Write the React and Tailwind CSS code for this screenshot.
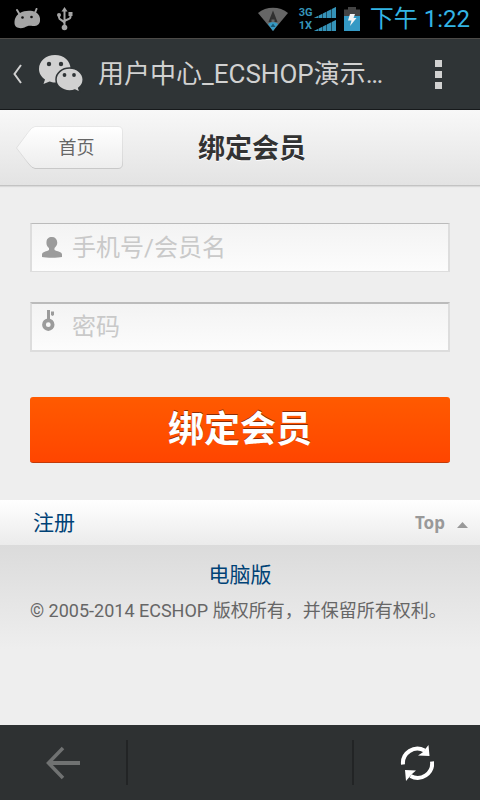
import React from 'react';

function AndroidIcon() {
  return (
    <svg width="28" height="22" viewBox="0 0 28 22" aria-hidden="true">
      <path d="M3 2 L6 7 M22.500 1 L20.500 6" stroke="#a5a5a5" strokeWidth="2" strokeLinecap="round" />
      <path d="M6 5 C10 2.500 17 2 21.500 4 C25 6 26.500 9 26 13 C25.500 17 22 18.500 18.500 18 C15 17.500 13 18 10.500 19.500 C6 21 0.500 20 0.500 15 C0.500 10 2.500 7 6 5Z" fill="#a5a5a5" />
      <circle cx="8.500" cy="9.500" r="1.300" fill="#111" />
      <circle cx="17.500" cy="9" r="1.300" fill="#111" />
    </svg>
  );
}

function UsbIcon() {
  return (
    <svg width="18" height="24" viewBox="0 0 18 24" fill="none" stroke="#a5a5a5" strokeWidth="2" aria-hidden="true">
      <path d="M8.500 4 V20 M3 8 V10.500 C3 13.500 8.500 13 8.500 16.500 M14.500 7 V10 C14.500 13 8.500 12 8.500 15" />
      <path d="M8.500 0 L11.500 4.500 H5.500Z" fill="#a5a5a5" stroke="none" />
      <circle cx="3" cy="8" r="2" fill="#a5a5a5" stroke="none" />
      <rect x="12.500" y="5" width="4" height="4" fill="#a5a5a5" stroke="none" />
      <circle cx="8.500" cy="20.500" r="2.800" fill="#a5a5a5" stroke="none" />
    </svg>
  );
}

function WifiIcon() {
  return (
    <svg width="30" height="24" viewBox="0 0 30 24" aria-hidden="true">
      <path d="M0 6 C8 -1 22 -1 30 6 L15 24Z" fill="#666" />
      <path d="M15 3.500 L19.500 15 H16.500 V12.500 H13.500 V15 H10.500Z" fill="#303030" />
      <path d="M10 17 C12.500 14.500 17.500 14.500 20 17 L15 24Z" fill="#3499c4" />
      <path d="M15 16.500 L17.500 20 H12.500Z" fill="#1b5570" />
    </svg>
  );
}

function SignalIcon() {
  return (
    <svg width="22" height="11" viewBox="0 0 22 11" aria-hidden="true">
      <path d="M0 11 L22 0 V11Z" fill="#1d4f63" />
      <path d="M0 11 L4 9 V11Z M5 8.500 L8 7 V11 H5Z M9 6.500 L12 5 V11 H9Z M13 4.500 L17 2.500 V11 H13Z M18 2 L22 0 V11 H18Z" fill="#3593b8" />
    </svg>
  );
}

function BatteryIcon() {
  return (
    <svg width="16" height="24" viewBox="0 0 16 24" aria-hidden="true">
      <path d="M4 0 H12 V2.500 H16 V9 H0 V2.500 H4Z" fill="#444" />
      <path d="M0 9 H16 V24 H0Z" fill="#3499c4" />
      <path d="M6 7 H11 L9.500 11 H12.500 L6 19 L7.500 13.500 H4Z" fill="#f4f4f4" />
    </svg>
  );
}

function WeChatIcon() {
  return (
    <svg width="45" height="38" viewBox="0 0 45 38" aria-hidden="true">
      <path d="M16 0 C7 0 0 6 0 14 C0 18.500 2.500 22 6 24.500 L4.500 29 L10.500 26.500 C12 27 14 27.500 16 27.500 C25 27.500 31.500 21.500 31.500 14 C31.500 6 25 0 16 0Z" fill="#d1d1d1" />
      <path d="M30.500 13 C23 13 17 18 17 24.500 C17 31 23 36 30.500 36 C32.500 36 34.500 35.700 36 35 L41 37.500 L39.700 33 C42.500 31 44.200 28 44.200 24.500 C44.200 18 38 13 30.500 13Z" fill="#d1d1d1" stroke="#2f3436" strokeWidth="1.500" />
      <circle cx="10" cy="9" r="2.200" fill="#2f3436" />
      <circle cx="22" cy="9" r="2.200" fill="#2f3436" />
      <circle cx="25.500" cy="20" r="1.900" fill="#2f3436" />
      <circle cx="35" cy="20" r="1.900" fill="#2f3436" />
    </svg>
  );
}

function UserIcon() {
  return (
    <svg width="20" height="21" viewBox="0 0 20 21" fill="#9b9b9b" aria-hidden="true">
      <path d="M10 0 C6.500 0 4.500 2 4.500 5 C4.200 7.500 5 9.500 7 11 V13 C5 14.500 0 14.500 0 17.500 V20 C4 21 16 21 20 20 V17.500 C20 14.500 15 14.500 12.500 13 V11 C14.500 9.500 15.500 7.500 15.200 5 C15 2 13 0 10 0Z" />
    </svg>
  );
}

function KeyIcon() {
  return (
    <svg width="13" height="21" viewBox="0 0 13 21" aria-hidden="true">
      <circle cx="6.300" cy="14.700" r="4.300" fill="none" stroke="#9b9b9b" strokeWidth="3.800" />
      <path d="M5 0 H8 V10 H5Z M9 1.500 H12 V5 L10.500 6 L9 5Z" fill="#9b9b9b" />
    </svg>
  );
}

function BackArrowIcon() {
  return (
    <svg width="34" height="34" viewBox="0 0 34 34" fill="none" stroke="#707272" aria-hidden="true">
      <path d="M34 17 H4" strokeWidth="4" />
      <path d="M17 2 L2.500 17 L17 32" strokeWidth="3.500" />
    </svg>
  );
}

function RefreshIcon() {
  return (
    <svg width="34" height="36" viewBox="0 0 34 36" aria-hidden="true">
      <path d="M3 19.500 A14.500 14.500 0 0 1 24.500 5.500 M32 16.500 A14.500 14.500 0 0 1 10.500 31" fill="none" stroke="#fff" strokeWidth="4" />
      <path d="M28.500 0 L29.500 11 L18 10.500 L22.500 7.500Z M5 25 L16 25.500 L12 29 L6 36Z" fill="#fff" />
    </svg>
  );
}

function StatusBar() {
  return (
    <div className="flex h-[38px] shrink-0 items-center bg-black pr-2.5 pl-3.5">
      <AndroidIcon />
      <span className="ml-3.5 flex">
        <UsbIcon />
      </span>
      <div className="ml-auto flex items-center">
        <WifiIcon />
        <div className="ml-[11px] flex flex-col text-[11px] leading-[13px] font-bold text-[#3593b8]">
          <div className="flex items-center gap-px">
            <span className="w-3.5">3G</span>
            <SignalIcon />
          </div>
          <div className="flex items-center gap-px">
            <span className="w-3.5">1X</span>
            <SignalIcon />
          </div>
        </div>
        <span className="ml-2 flex">
          <BatteryIcon />
        </span>
        <span className="ml-2.5 text-2xl leading-8 text-[#33b5e5]">下午 1:22</span>
      </div>
    </div>
  );
}

function AppBar() {
  return (
    <header className="flex h-[72px] shrink-0 items-center border-t border-b border-t-[#4c4a47] border-b-[#16191b] bg-[#2f3436] pl-3">
      <button type="button" aria-label="Back" className="flex items-center gap-4">
        <svg width="11" height="20" viewBox="0 0 11 20" fill="none" stroke="#d1d1d1" strokeWidth="2" aria-hidden="true">
          <path d="M9 1 L2.500 10 L9 19" />
        </svg>
        <WeChatIcon />
      </button>
      <h1 className="ml-3.5 min-w-0 flex-1 text-[26px] leading-8 whitespace-nowrap text-[#d1d1d1]">
        用户中心_ECSHOP演示…
      </h1>
      <button type="button" aria-label="More options" className="flex w-[84px] shrink-0 flex-col items-center gap-1">
        <span className="size-[7px] bg-[#d1d1d1]" />
        <span className="size-[7px] bg-[#d1d1d1]" />
        <span className="size-[7px] bg-[#d1d1d1]" />
      </button>
    </header>
  );
}

function PageHeader() {
  return (
    <div className="grid h-[76px] shrink-0 grid-cols-[1fr_auto_1fr] items-center border-b border-[#c3c3c3] bg-linear-to-b from-[#f8f8f8] to-[#e3e3e3] px-[15px] shadow-[0_1px_1px_#dadada]">
      <a href="#home" className="grid w-[109px] items-center">
        <svg className="col-start-1 row-start-1" width="109" height="46" viewBox="0 0 109 46" aria-hidden="true">
          <defs>
            <linearGradient id="tag" x1="0" y1="0" x2="0" y2="1">
              <stop offset="0" stopColor="#fff" />
              <stop offset="1" stopColor="#ededed" />
            </linearGradient>
            <linearGradient id="tagEdge" x1="0" y1="0" x2="0" y2="1">
              <stop offset="0" stopColor="#e8e8e8" />
              <stop offset="0.800" stopColor="#dadada" />
              <stop offset="1" stopColor="#c8c8c8" />
            </linearGradient>
          </defs>
          <path d="M20 1.500 H103 Q107.500 1.500 107.500 6 V39 Q107.500 43.500 103 43.500 H20 Q17 43.500 13 38 L1.500 23 L13 7.500 Q17 1.500 20 1.500Z" fill="url(#tag)" stroke="url(#tagEdge)" />
        </svg>
        <span className="col-start-1 row-start-1 pl-3.5 text-center text-lg leading-6 text-[#666]">首页</span>
      </a>
      <h2 className="pt-0.5 pl-6 text-[27px] leading-9 font-bold text-[#333] [text-shadow:0_1px_0_#fff]">绑定会员</h2>
    </div>
  );
}

function Field({ label, type, icon, boxClass, iconClass }) {
  return (
    <label className={`flex border-x-2 border-t-[#bbb] border-r-[#ddd] border-b-[#ddd] border-l-[#ddd] bg-linear-to-b from-[#f3f3f3] to-[#fcfcfc] pl-2.5 ${boxClass}`}>
      <span className={iconClass}>{icon}</span>
      <input
        type={type}
        aria-label={label}
        placeholder={label}
        className="min-w-0 flex-1 bg-transparent text-2xl outline-none placeholder:text-[#c9c9c9]"
      />
    </label>
  );
}

function BindForm() {
  return (
    <form className="flex shrink-0 flex-col px-[30px] pt-[37px] pb-[37px]" onSubmit={(e) => e.preventDefault()}>
      <div className="flex flex-col gap-[30px]">
        <Field
          label="手机号/会员名"
          type="text"
          icon={<UserIcon />}
          boxClass="h-[49px] border-y"
          iconClass="flex w-[30px] items-center"
        />
        <Field
          label="密码"
          type="password"
          icon={<KeyIcon />}
          boxClass="h-[50px] border-y-2"
          iconClass="flex w-[30px] items-start pt-1.5"
        />
      </div>
      <button
        type="submit"
        className="mt-[45px] h-[66px] rounded-[3px] border-b border-[#c23a08] bg-linear-to-b from-[#ff5a00] to-[#ff4500] text-4xl font-bold text-white [text-shadow:0_-1px_0_#8a2e08]"
      >
        绑定会员
      </button>
    </form>
  );
}

function PageFooter() {
  return (
    <footer className="flex flex-1 flex-col">
      <div className="flex h-[45px] items-center justify-between bg-linear-to-b from-white to-[#ebebeb] pr-3 pl-[33px]">
        <a href="#register" className="text-[21px] leading-7 text-[#004276]">注册</a>
        <a href="#top" className="flex items-center gap-3 font-['Noto_Sans',sans-serif] text-[17px] leading-6 font-bold text-[#999]">
          Top
          <svg className="mt-1" width="11" height="6" viewBox="0 0 11 6" fill="#999" aria-hidden="true">
            <path d="M5.500 0 L11 6 H0Z" />
          </svg>
        </a>
      </div>
      <div className="flex flex-col items-center gap-2 bg-linear-to-b from-[#dbdbdb] to-[#eee] pt-4 pb-6">
        <a href="#desktop" className="text-[21px] leading-7 text-[#004276]">电脑版</a>
        <p className="w-full pl-[30px] text-lg leading-7 whitespace-nowrap text-[#666]">
          © 2005-2014 ECSHOP 版权所有，并保留所有权利。
        </p>
      </div>
    </footer>
  );
}

function BrowserBar() {
  return (
    <nav className="flex h-[75px] shrink-0 items-center bg-[#2e3132]">
      <button type="button" aria-label="Go back" className="flex h-[45px] w-32 items-center justify-center border-r-2 border-[#222425]">
        <BackArrowIcon />
      </button>
      <div className="flex-1" />
      <button type="button" aria-label="Refresh" className="flex h-[45px] w-32 items-center justify-center border-l-2 border-[#222425]">
        <RefreshIcon />
      </button>
    </nav>
  );
}

export default function App() {
  return (
    <div className="flex min-h-screen flex-col bg-[#eee] font-[Roboto,'Noto_Sans_CJK_SC',sans-serif]">
      <StatusBar />
      <AppBar />
      <main className="flex flex-1 flex-col">
        <PageHeader />
        <BindForm />
        <PageFooter />
      </main>
      <BrowserBar />
    </div>
  );
}
